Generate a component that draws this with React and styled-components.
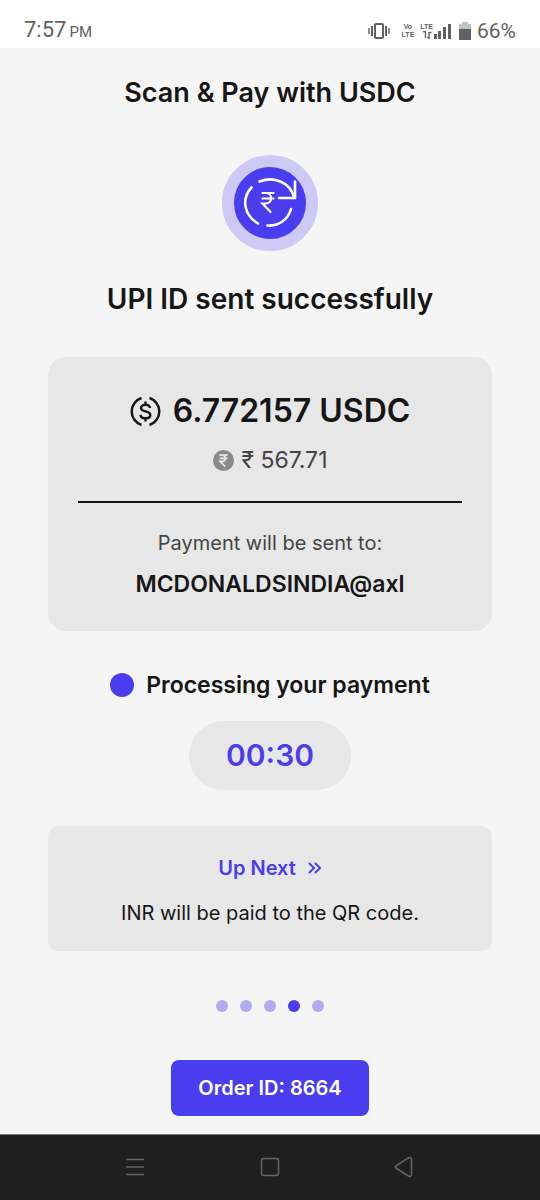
import styled, { createGlobalStyle } from "styled-components";

const STEPS = [1, 2, 3, 4, 5];
const CURRENT_STEP = 4;

const VibrateIcon = () => (
  <svg width="22" height="16" viewBox="0 0 22 16" fill="none" stroke="#616161">
    <rect x="7" y="1" width="8" height="14" rx="1" strokeWidth="2" />
    <path d="M4 3v10M18 3v10" strokeWidth="2" />
    <path d="M1 5v6M21 5v6" strokeWidth="1.4" />
  </svg>
);

const DataArrowsIcon = () => (
  <svg width="10" height="8" viewBox="0 0 10 8" fill="none" stroke="#616161" strokeWidth="1.4">
    <path d="M3.5 0v7M1 0.7h2.5M7 8V1M7 1.5h2.5M5.5 6L7 7.5" />
  </svg>
);

const SignalIcon = () => (
  <svg width="17" height="16" viewBox="0 0 17 16" fill="#616161">
    <rect x="0" y="11" width="3" height="5" />
    <rect x="4" y="8" width="3" height="8" />
    <rect x="9" y="4" width="3" height="12" />
    <rect x="14" y="1" width="3" height="15" />
  </svg>
);

const BatteryIcon = () => (
  <svg width="12" height="18" viewBox="0 0 12 18">
    <path d="M3 0h6v2h3v6H0V2h3z" fill="#c2c2c2" />
    <path d="M0 7h12v11H0z" fill="#616161" />
  </svg>
);

const RupeeRefreshIcon = () => (
  <svg width="72" height="72" viewBox="0 0 72 72" fill="none" stroke="#fff" strokeLinecap="round">
    <g strokeWidth="2.6">
      <path d="M25.5 14.5C41 8.500 56 16 60 30" />
      <path d="M61 14.5v16.500H45" strokeLinejoin="miter" />
      <path d="M17.500 20.500C7 32 10 48 24 56.500" />
      <path d="M33.500 58.500C45 59.500 54 52.500 57 42" />
    </g>
    <path
      d="M28.500 26h11M28.500 31.500h11M28.500 26h3c7.500 0 7.500 10.500 0 10.500h-3l8 8.500"
      strokeWidth="2.2"
    />
  </svg>
);

const UsdcIcon = () => (
  <svg width="31" height="31" viewBox="0 0 31 31" fill="none" stroke="#161616">
    <path d="M11.500 2a14.200 14.200 0 0 0 0 27M19.500 2a14.200 14.200 0 0 1 0 27" strokeWidth="2.500" />
    <path
      d="M20 12c-.3-2-2-3.200-4.500-3.200s-4.500 1.200-4.500 3.200c0 4.700 9.300 2 9.300 7 0 2-2 3.300-4.800 3.300s-4.800-1.300-5-3.500M15.500 5.500v3.300M15.500 22.300v3.300"
      strokeWidth="2.400"
    />
  </svg>
);

const RupeeCoinIcon = () => (
  <svg width="21" height="21" viewBox="0 0 21 21" fill="none">
    <circle cx="10.500" cy="10.500" r="10.500" fill="#8a8a8a" />
    <path
      d="M6.500 5.200h8M6.500 8.300h8M6.500 5.200h2.500c4.300 0 4.300 6.200 0 6.200H7l5.300 5.200"
      stroke="#e7e7e7"
      strokeWidth="1.700"
    />
  </svg>
);

const DoubleChevronIcon = () => (
  <svg width="14" height="12" viewBox="0 0 14 12" fill="none" stroke="#4a3df0" strokeWidth="2">
    <path d="M1 1l5 5-5 5M7 1l5 5-5 5" />
  </svg>
);

const MenuIcon = () => (
  <svg width="20" height="20" viewBox="0 0 20 20" stroke="#666" strokeWidth="1.400">
    <path d="M1 2.500h18M1 10h18M1 17.500h18" />
  </svg>
);

const HomeIcon = () => (
  <svg width="20" height="20" viewBox="0 0 20 20" fill="none" stroke="#666" strokeWidth="1.500">
    <rect x="1.500" y="1.500" width="17" height="17" rx="2.500" />
  </svg>
);

const BackIcon = () => (
  <svg width="22" height="22" viewBox="0 0 22 22" fill="none" stroke="#666" strokeWidth="1.500">
    <path d="M2.500 9.500L14.500 1.800Q17.500 .5 17.500 3.500v15q0 3-3 1.500L2.500 12.500Q0 11 2.500 9.500z" />
  </svg>
);

const App = () => {
  return (
    <Screen>
      <GlobalStyle />
      <StatusBar>
        <Clock>
          7:57<small>PM</small>
        </Clock>
        <StatusIcons>
          <VibrateIcon />
          <NetworkLabel>
            <span>Vo</span>
            <span>LTE</span>
          </NetworkLabel>
          <Signal>
            <NetworkLabel>
              <span>LTE</span>
              <DataArrowsIcon />
            </NetworkLabel>
            <SignalIcon />
          </Signal>
          <Battery>
            <BatteryIcon />
            66%
          </Battery>
        </StatusIcons>
      </StatusBar>

      <Main>
        <Title>Scan &amp; Pay with USDC</Title>
        <HeroIcon>
          <RupeeRefreshIcon />
        </HeroIcon>
        <Heading>UPI ID sent successfully</Heading>

        <PaymentCard>
          <Amount>
            <UsdcIcon />
            6.772157 USDC
          </Amount>
          <FiatAmount>
            <RupeeCoinIcon />₹ 567.71
          </FiatAmount>
          <Divider />
          <PayeeLabel>Payment will be sent to:</PayeeLabel>
          <Payee>MCDONALDSINDIA@axl</Payee>
        </PaymentCard>

        <Processing>
          <ProcessingDot />
          Processing your payment
        </Processing>
        <Timer>00:30</Timer>

        <NextCard>
          <NextTitle>
            Up Next
            <DoubleChevronIcon />
          </NextTitle>
          <NextText>INR will be paid to the QR code.</NextText>
        </NextCard>

        <Steps>
          {STEPS.map((step) => (
            <Step key={step} $active={step === CURRENT_STEP} />
          ))}
        </Steps>
        <OrderButton type="button">Order ID: 8664</OrderButton>
      </Main>

      <NavBar>
        <NavButton type="button" aria-label="Recent apps">
          <MenuIcon />
        </NavButton>
        <NavButton type="button" aria-label="Home">
          <HomeIcon />
        </NavButton>
        <NavButton type="button" aria-label="Back">
          <BackIcon />
        </NavButton>
      </NavBar>
    </Screen>
  );
};

const GlobalStyle = createGlobalStyle`
  * {
    box-sizing: border-box;
    margin: 0;
    padding: 0;
  }
  body {
    background: #f5f5f5;
    color: #161616;
    font-family: Inter, "Liberation Sans", sans-serif;
  }
  button {
    border: none;
    font-family: inherit;
    cursor: pointer;
  }
  svg {
    display: block;
    flex-shrink: 0;
  }
`;

const Screen = styled.div`
  min-height: 100vh;
  display: flex;
  flex-direction: column;
`;

const StatusBar = styled.header`
  display: flex;
  justify-content: space-between;
  align-items: center;
  height: 48px;
  padding: 14px 24px 0;
  background: #fff;
  color: #616161;
  font-family: Roboto, sans-serif;
`;

const Clock = styled.time`
  font-size: 22px;
  line-height: 24px;

  small {
    margin-left: 3px;
    font-size: 15px;
  }
`;

const StatusIcons = styled.div`
  display: flex;
  align-items: center;
  gap: 12px;
`;

const NetworkLabel = styled.div`
  display: flex;
  flex-direction: column;
  align-items: center;
  font-family: "Liberation Sans", sans-serif;
  font-size: 7px;
  font-weight: 700;
  line-height: 8px;
`;

const Signal = styled.div`
  display: flex;
  align-items: center;
  gap: 1px;
  margin-left: -6px;
`;

const Battery = styled.div`
  display: flex;
  align-items: center;
  gap: 6px;
  margin-left: -4px;
  font-size: 21px;
  line-height: 24px;
`;

const Main = styled.main`
  display: flex;
  flex-direction: column;
  align-items: center;
  padding: 29px 48px 18px;
  text-align: center;
`;

const Title = styled.h1`
  font-size: 27px;
  font-weight: 600;
  line-height: 32px;
`;

const HeroIcon = styled.div`
  display: flex;
  margin-top: 46px;
  border: 12px solid #cdc9f4;
  border-radius: 50%;
  background: #4a3df0;
`;

const Heading = styled.h2`
  margin-top: 30px;
  font-size: 28px;
  font-weight: 600;
  line-height: 36px;
`;

const Card = styled.section`
  width: 100%;
  background: #e7e7e7;
`;

const PaymentCard = styled(Card)`
  margin-top: 40px;
  padding: 32px 30px;
  border-radius: 18px;
`;

const Amount = styled.p`
  display: flex;
  justify-content: center;
  align-items: center;
  gap: 12px;
  font-size: 32px;
  font-weight: 600;
  line-height: 44px;
`;

const FiatAmount = styled.p`
  display: flex;
  justify-content: center;
  align-items: center;
  gap: 8px;
  margin-top: 12px;
  color: #444;
  font-size: 23px;
  line-height: 30px;
`;

const Divider = styled.hr`
  height: 2px;
  margin: 26px 0;
  border: none;
  background: #161616;
`;

const PayeeLabel = styled.p`
  color: #444;
  font-size: 20px;
  line-height: 28px;
`;

const Payee = styled.p`
  margin-top: 12px;
  font-size: 23px;
  font-weight: 600;
  line-height: 30px;
`;

const Processing = styled.p`
  display: flex;
  align-items: center;
  gap: 12px;
  margin-top: 38px;
  font-size: 23px;
  font-weight: 600;
  line-height: 32px;
`;

const ProcessingDot = styled.span`
  width: 24px;
  height: 24px;
  border-radius: 50%;
  background: #4a3df0;
`;

const Timer = styled.time`
  min-width: 162px;
  margin-top: 20px;
  border-radius: 35px;
  background: #e7e7e7;
  color: #4a3df0;
  font-size: 30px;
  font-weight: 600;
  line-height: 69px;
`;

const NextCard = styled(Card)`
  margin-top: 36px;
  padding: 29px 24px 25px;
  border-radius: 10px;
`;

const NextTitle = styled.h3`
  display: flex;
  justify-content: center;
  align-items: center;
  gap: 12px;
  color: #4a3df0;
  font-size: 20px;
  font-weight: 600;
  line-height: 26px;
`;

const NextText = styled.p`
  margin-top: 19px;
  font-size: 20px;
  line-height: 26px;
`;

const Steps = styled.div`
  display: flex;
  gap: 12px;
  margin-top: 49px;
`;

const Step = styled.span`
  width: 12px;
  height: 12px;
  border-radius: 50%;
  background: ${({ $active }) => ($active ? "#4a3df0" : "#b1abf0")};
`;

const OrderButton = styled.button`
  min-width: 198px;
  margin-top: 48px;
  padding: 0 24px;
  border-radius: 8px;
  background: #4a3df0;
  color: #fff;
  font-size: 20px;
  font-weight: 600;
  line-height: 56px;
`;

const NavBar = styled.nav`
  display: grid;
  grid-template-columns: repeat(3, 25%);
  justify-content: center;
  align-items: center;
  height: 66px;
  margin-top: auto;
  padding-bottom: 2px;
  border-top: 1px solid #777;
  background: #1f1f1f;
`;

const NavButton = styled.button`
  display: flex;
  justify-content: center;
  align-items: center;
  height: 48px;
  background: none;
`;

export default App;
